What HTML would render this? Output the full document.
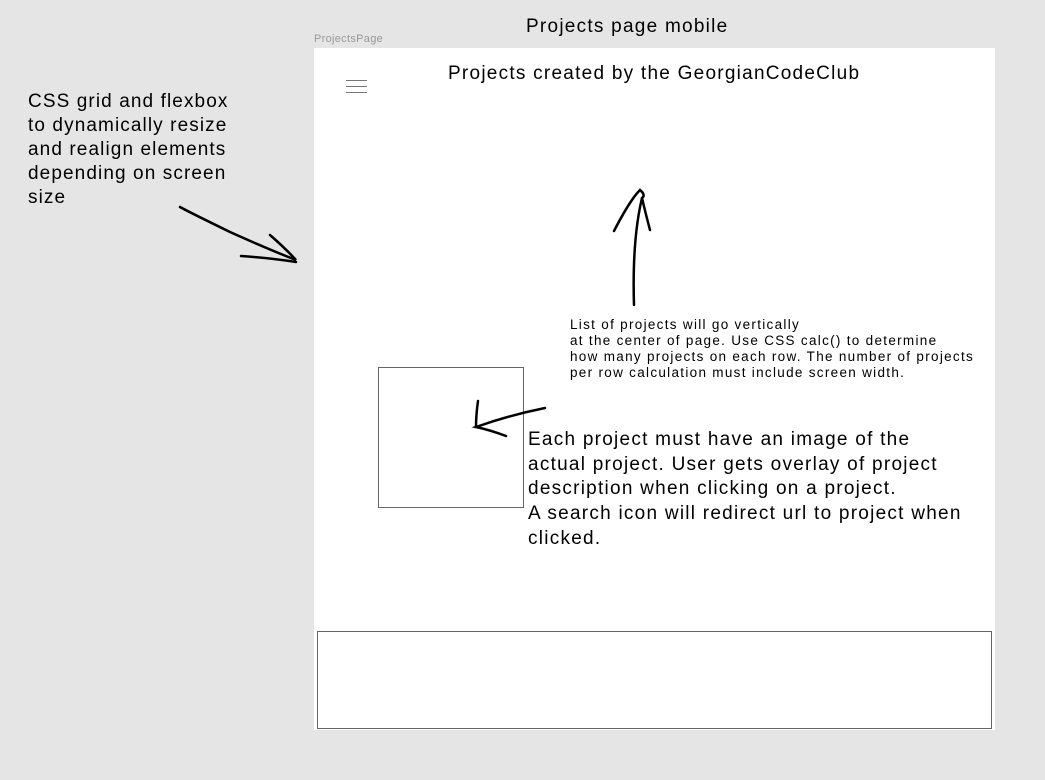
<!DOCTYPE html>
<html><head><style>
body{margin:0;width:1045px;height:780px;background:#e5e5e5;position:relative;overflow:hidden;font-family:"Liberation Sans",sans-serif;color:#000}
.a{position:absolute;white-space:nowrap}
</style></head><body>
<div class="a" style="left:526px;top:16px;font-size:19px;letter-spacing:1.25px">Projects page mobile</div>
<div class="a" style="left:314px;top:33px;font-size:11px;color:#999;letter-spacing:0.3px">ProjectsPage</div>
<div class="a" style="left:314px;top:48px;width:681px;height:682px;background:#fff"></div>
<div class="a" style="left:448px;top:63px;font-size:19px;letter-spacing:1.25px">Projects created by the GeorgianCodeClub</div>
<div class="a" style="left:346px;top:80px;width:21px;height:1px;background:#777;box-shadow:0 6px 0 #777,0 12px 0 #777"></div>
<div class="a" style="left:28px;top:90px;font-size:19px;line-height:24px;letter-spacing:1.1px">CSS grid and flexbox<br>to dynamically resize<br>and realign elements<br>depending on screen<br>size</div>
<div class="a" style="left:570px;top:317px;font-size:13.5px;line-height:16px;letter-spacing:1.3px">List of projects will go vertically<br>at the center of page. Use CSS calc() to determine<br>how many projects on each row. The number of projects<br>per row calculation must include screen width.</div>
<div class="a" style="left:378px;top:367px;width:144px;height:139px;border:1px solid #666"></div>
<div class="a" style="left:528px;top:428px;font-size:19px;line-height:24.7px;letter-spacing:1.25px">Each project must have an image of the<br>actual project. User gets overlay of project<br>description when clicking on a project.<br>A search icon will redirect url to project when<br>clicked.</div>
<div class="a" style="left:317px;top:631px;width:673px;height:96px;border:1px solid #666"></div>
<svg class="a" style="left:0;top:0" width="1045" height="780" fill="none" stroke="#000" stroke-width="2.5" stroke-linecap="round">
<path d="M180 207 Q185 210 230 232 Q270 250 296 260 Q285 248 270 235"/>
<path d="M241 256 Q270 258 296 262"/>
<path d="M634 305 Q632 240 642 198 Q646 215 650 230"/>
<path d="M614 231 Q630 200 640 190 Q646 195 642 198"/>
<path d="M545 408 Q510 415 476 427 Q490 430 506 436"/>
<path d="M478 401 Q476 415 476 427"/>
</svg>
</body></html>
